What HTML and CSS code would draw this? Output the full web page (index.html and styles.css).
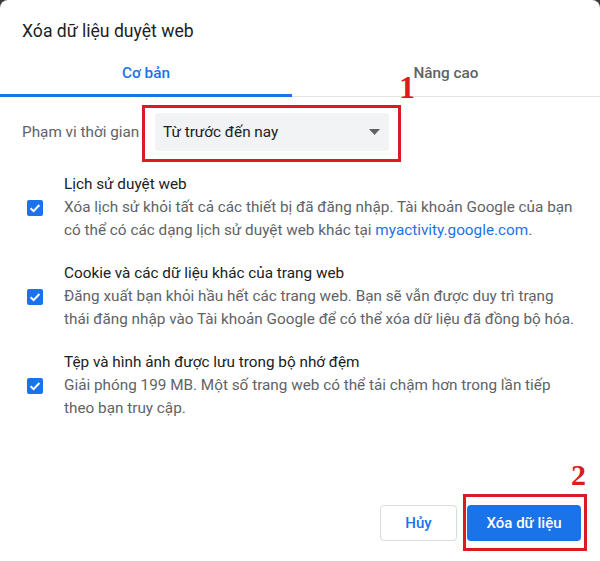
FILE: index.html
```html
<!DOCTYPE html>
<html lang="vi">
<head>
<meta charset="utf-8">
<title>Xóa dữ liệu duyệt web</title>
<link rel="stylesheet" href="styles.css">
</head>
<body>
<div class="dialog">
  <div class="title">Xóa dữ liệu duyệt web</div>
  <div class="tabs">
    <div class="tab active">Cơ bản</div>
    <div class="tab">Nâng cao</div>
    <span class="mark mark1">1</span>
  </div>
  <div class="range-row">
    <div class="range-label">Phạm vi thời gian</div>
    <div class="select annotated-select">
      <span class="select-text">Từ trước đến nay</span>
      <svg class="select-arrow" width="11" height="6" viewBox="0 0 11 6"><path d="M0 0 L11 0 L5.5 6 Z" fill="#5f6368"/></svg>
    </div>
  </div>
  <div class="items">
    <div class="item">
      <div class="checkbox"><svg width="16" height="16" viewBox="0 0 16 16"><path d="M3.6 8.2 L6.6 11.1 L12.4 5" fill="none" stroke="#fff" stroke-width="2"/></svg></div>
      <div class="item-text">
        <div class="item-title">Lịch sử duyệt web</div>
        <div class="item-desc">Xóa lịch sử khỏi tất cả các thiết bị đã đăng nhập. Tài khoản Google của bạn<br>có thể có các dạng lịch sử duyệt web khác tại <span class="link">myactivity.google.com</span>.</div>
      </div>
    </div>
    <div class="item">
      <div class="checkbox"><svg width="16" height="16" viewBox="0 0 16 16"><path d="M3.6 8.2 L6.6 11.1 L12.4 5" fill="none" stroke="#fff" stroke-width="2"/></svg></div>
      <div class="item-text">
        <div class="item-title">Cookie và các dữ liệu khác của trang web</div>
        <div class="item-desc">Đăng xuất bạn khỏi hầu hết các trang web. Bạn sẽ vẫn được duy trì trạng<br>thái đăng nhập vào Tài khoản Google để có thể xóa dữ liệu đã đồng bộ hóa.</div>
      </div>
    </div>
    <div class="item">
      <div class="checkbox"><svg width="16" height="16" viewBox="0 0 16 16"><path d="M3.6 8.2 L6.6 11.1 L12.4 5" fill="none" stroke="#fff" stroke-width="2"/></svg></div>
      <div class="item-text">
        <div class="item-title">Tệp và hình ảnh được lưu trong bộ nhớ đệm</div>
        <div class="item-desc">Giải phóng 199 MB. Một số trang web có thể tải chậm hơn trong lần tiếp<br>theo bạn truy cập.</div>
      </div>
    </div>
  </div>
  <div class="actions">
    <button class="btn btn-cancel">Hủy</button>
    <div class="annotated-btn">
      <span class="mark mark2">2</span>
      <button class="btn btn-primary">Xóa dữ liệu</button>
    </div>
  </div>
</div>
</body>
</html>
```
FILE: styles.css
```css
html, body {
  margin: 0;
  padding: 0;
}
body {
  background: #3a3a3a;
  font-family: Roboto, "Noto Sans", Arial, sans-serif;
  width: 600px;
  height: 561px;
  overflow: hidden;
}
.dialog {
  background: #fff;
  width: 600px;
  height: 561px;
  border-radius: 8px 8px 0 0;
  display: flex;
  flex-direction: column;
  box-sizing: border-box;
}
.title {
  padding: 20px 0 0 22px;
  font-size: 17.6px;
  line-height: 22px;
  color: #202124;
}
.tabs {
  position: relative;
  margin-top: 10px;
  display: flex;
  border-bottom: 1px solid #e3e4e6;
}
.tab {
  height: 42px;
  margin-bottom: -1px;
  border-bottom: 3px solid transparent;
  display: flex;
  align-items: center;
  justify-content: center;
  font-size: 15.3px;
  font-weight: 500;
  color: #5f6368;
  flex: 1;
}
.tab.active {
  flex: 0 0 292px;
  color: #1a73e8;
  border-bottom-color: #1a73e8;
}
.mark {
  position: absolute;
  font-family: "Liberation Serif", "Times New Roman", serif;
  font-weight: bold;
  color: #dc1a22;
  line-height: 1;
}
.mark1 {
  font-size: 32px;
  left: 399px;
  top: 19px;
}
.range-row {
  margin-top: 16px;
  padding-left: 22px;
  display: flex;
  align-items: center;
}
.range-label {
  width: 133px;
  font-size: 15.3px;
  color: #5f6368;
  white-space: nowrap;
}
.select {
  position: relative;
  width: 234px;
  height: 38px;
  box-sizing: border-box;
  background: #f1f3f4;
  border-radius: 4px;
  display: flex;
  align-items: center;
  justify-content: space-between;
  padding: 0 9px 0 8px;
  font-size: 15.3px;
  color: #202124;
}
.annotated-select::before {
  content: "";
  position: absolute;
  top: -8px;
  left: -13px;
  right: -12px;
  bottom: -11px;
  border: 3px solid #dc1a22;
  pointer-events: none;
}
.items {
  margin-top: 22px;
  display: flex;
  flex-direction: column;
  gap: 20px;
}
.item {
  display: flex;
}
.checkbox {
  flex: 0 0 16px;
  height: 16px;
  margin: 27px 0 0 27px;
  background: #1a73e8;
  border-radius: 2px;
}
.checkbox svg {
  display: block;
}
.item-text {
  margin-left: 21px;
  font-size: 15.3px;
  line-height: 23px;
  white-space: nowrap;
}
.item-title {
  color: #202124;
}
.item-desc {
  color: #5f6368;
}
.link {
  color: #1a73e8;
}
.actions {
  margin-top: auto;
  padding: 0 19px 20px 0;
  display: flex;
  justify-content: flex-end;
  gap: 10px;
}
.btn {
  height: 36px;
  border-radius: 4px;
  font-family: Roboto, "Noto Sans", Arial, sans-serif;
  font-size: 15px;
  font-weight: 500;
  box-sizing: border-box;
  cursor: pointer;
  padding: 0;
}
.btn-cancel {
  width: 77px;
  background: #fff;
  border: 1px solid #dadce0;
  color: #1a73e8;
}
.btn-primary {
  width: 114px;
  background: #1a73e8;
  border: none;
  color: #fff;
  display: block;
}
.annotated-btn {
  position: relative;
}
.annotated-btn::before {
  content: "";
  position: absolute;
  top: -11px;
  left: -4px;
  right: -6px;
  bottom: -10px;
  border: 3px solid #dc1a22;
  pointer-events: none;
}
.mark2 {
  font-size: 30px;
  left: 104px;
  top: -45px;
}
```
